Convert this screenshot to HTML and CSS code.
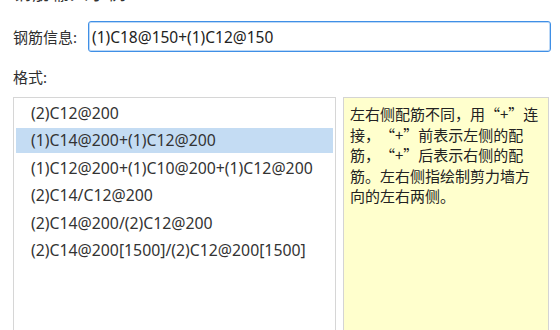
FILE: index.html
```html
<!DOCTYPE html>
<html lang="zh-CN">
<head>
<meta charset="utf-8">
<title>钢筋输入示例</title>
<link rel="stylesheet" href="styles.css">
</head>
<body>
<div class="dialog">
  <div class="titlebar">
    <span class="title">钢筋输入示例</span>
    <span class="close">✕</span>
  </div>
  <div class="field-row">
    <label class="field-label" for="rebar">钢筋信息:</label>
    <input id="rebar" class="field-input" type="text" value="(1)C18@150+(1)C12@150">
  </div>
  <div class="section-label">格式:</div>
  <div class="panes">
    <ul class="format-list">
      <li class="item">(2)C12@200</li>
      <li class="item selected">(1)C14@200+(1)C12@200</li>
      <li class="item">(1)C12@200+(1)C10@200+(1)C12@200</li>
      <li class="item">(2)C14/C12@200</li>
      <li class="item">(2)C14@200/(2)C12@200</li>
      <li class="item">(2)C14@200[1500]/(2)C12@200[1500]</li>
    </ul>
    <div class="hint">左右侧配筋不同，用“+”连接，“+”前表示左侧的配筋，“+”后表示右侧的配筋。左右侧指绘制剪力墙方向的左右两侧。</div>
  </div>
</div>
</body>
</html>
```
FILE: styles.css
```css
html, body {
  margin: 0;
  padding: 0;
  background: #ffffff;
}
body {
  font-family: "Noto Sans", "Noto Sans CJK SC", sans-serif;
  font-size: 15px;
  color: #2e2e2e;
  overflow: hidden;
}
.dialog {
  width: 560px;
  height: 330px;
}
.titlebar {
  height: 4px;
  overflow: hidden;
  display: flex;
  align-items: flex-end;
  justify-content: space-between;
  padding: 0 12px 0 13px;
}
.title {
  font-size: 18px;
  line-height: 22px;
  letter-spacing: 1px;
  color: #333;
  flex: none;
}
.close {
  font-size: 14px;
  line-height: 18px;
  color: #666;
  flex: none;
}
.field-row {
  display: flex;
  align-items: center;
  margin-top: 17px;
  padding: 0 9px 0 13px;
}
.field-label {
  width: 75px;
  flex: none;
  line-height: 20px;
}
.field-input {
  flex: 1;
  box-sizing: border-box;
  height: 31px;
  margin: 0;
  padding: 0 0 0 3px;
  border: 1px solid #3f8fe6;
  box-shadow: inset 0 0 0 1px rgba(63, 143, 230, 0.35);
  border-radius: 3px;
  font-family: "Noto Sans", "Noto Sans CJK SC", sans-serif;
  font-size: 15.5px;
  color: #222;
  outline: none;
  background: #fff;
}
.section-label {
  margin-top: 15px;
  padding-left: 13px;
  line-height: 20px;
}
.panes {
  display: flex;
  gap: 7px;
  margin-top: 10px;
  padding: 0 11px 0 13px;
  height: 260px;
}
.format-list {
  list-style: none;
  margin: 0;
  box-sizing: border-box;
  width: 323px;
  flex: none;
  padding: 3px 2px;
  border: 1px solid #d6d6d6;
  display: flex;
  flex-direction: column;
  gap: 2.4px;
}
.item {
  height: 25px;
  line-height: 25px;
  padding-left: 15px;
  white-space: nowrap;
  color: #333;
  font-size: 15.8px;
}
.item.selected {
  background: #c4dcf3;
}
.hint {
  flex: 1;
  box-sizing: border-box;
  border: 1px solid #d4d4d4;
  background: #ffffcd;
  padding: 6px 6px 0 6px;
  line-height: 20.6px;
  color: #222;
  font-family: "Noto Sans CJK SC", sans-serif;
  text-spacing-trim: space-all;
}
```
